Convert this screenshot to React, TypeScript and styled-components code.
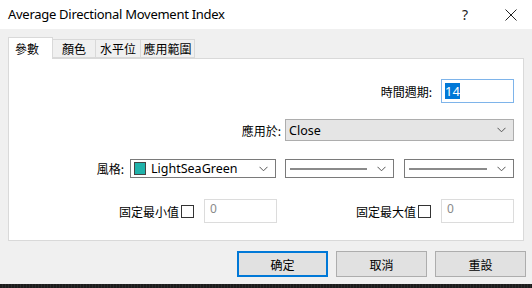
import React from "react";
import styled, { createGlobalStyle } from "styled-components";

const GlobalStyle = createGlobalStyle`
    html, body {
        margin: 0;
        padding: 0;
        background: #f0f0f0;
    }
    body {
        font-family: "Noto Sans", "Noto Sans CJK TC", sans-serif;
        font-size: 12px;
        color: #000;
    }
`

const Window = styled.div`
    width: 532px;
    height: 288px;
    display: flex;
    flex-direction: column;
    background: #f0f0f0;
    overflow: hidden;
`

const TitleBar = styled.div`
    height: 29px;
    background: white;
    display: flex;
    align-items: center;
    padding-left: 8px;
    flex-shrink: 0;
`

const Title = styled.div`
    flex: 1;
    font-family: "Noto Sans", sans-serif;
    font-size: 13px;
    letter-spacing: -0.28px;
    padding-bottom: 1px;
`

const TitleButton = styled.div<{ $w: number }>`
    width: ${p => p.$w}px;
    height: 29px;
    display: flex;
    align-items: center;
    justify-content: center;
    color: #222;
    font-family: "Noto Sans", sans-serif;
    font-size: 14px;
`

const Body = styled.div`
    flex: 1;
    display: flex;
    flex-direction: column;
    padding: 8px 8px 0 8px;
`

const TabRow = styled.div`
    display: flex;
    align-items: flex-end;
    height: 21px;
    position: relative;
    z-index: 1;
`

const Tab = styled.div<{ $active?: boolean; $w: number }>`
    width: ${p => p.$w}px;
    height: ${p => (p.$active ? 22 : 19)}px;
    margin-bottom: ${p => (p.$active ? -1 : 0)}px;
    box-sizing: border-box;
    display: flex;
    align-items: center;
    justify-content: ${p => (p.$active ? "flex-start" : "center")};
    padding-left: ${p => (p.$active ? 6 : 0)}px;
    background: ${p => (p.$active ? "white" : "#f0f0f0")};
    border: 1px solid #d9d9d9;
    border-bottom: ${p => (p.$active ? "none" : "1px solid #d9d9d9")};
    border-left-width: ${p => (p.$active ? 1 : 0)}px;
    font-family: "Noto Sans CJK TC", sans-serif;
    font-size: 12px;
`

const Panel = styled.div`
    height: 183px;
    box-sizing: border-box;
    background: white;
    border: 1px solid #d9d9d9;
    padding: 20px 9px 0 0;
    display: flex;
    flex-direction: column;
`

const Row = styled.div<{ $top: number; $h: number }>`
    display: flex;
    align-items: center;
    justify-content: flex-end;
    margin-top: ${p => p.$top}px;
    height: ${p => p.$h}px;
`

const Label = styled.span<{ $gap: number }>`
    font-family: "Noto Sans CJK TC", sans-serif;
    font-size: 12px;
    margin-right: ${p => p.$gap}px;
    white-space: nowrap;
`

const TextInput = styled.div<{ $focus?: boolean; $disabled?: boolean }>`
    width: 73px;
    height: 24px;
    box-sizing: border-box;
    border: 1px solid ${p => (p.$focus ? "#7eb4ea" : p.$disabled ? "#dcdcdc" : "#7a7a7a")};
    background: white;
    padding: ${p => (p.$disabled ? "1px 0 0 5px" : "3px 0 0 3px")};
    display: flex;
    align-items: flex-start;
    font-family: "Noto Sans", sans-serif;
    font-size: ${p => (p.$disabled ? 12 : 13)}px;
    line-height: ${p => (p.$disabled ? 15 : 16)}px;
    color: ${p => (p.$disabled ? "#8a8a8a" : "#000")};
`

const Selected = styled.span`
    background: #0078d7;
    color: white;
`

const Select = styled.div<{ $w: number; $h: number; $gray?: boolean; $gap?: number }>`
    width: ${p => p.$w}px;
    height: ${p => p.$h}px;
    box-sizing: border-box;
    border: 1px solid ${p => (p.$gray ? "#adadad" : "#7a7a7a")};
    background: ${p => (p.$gray ? "#e5e5e5" : "white")};
    margin-left: ${p => p.$gap ?? 0}px;
    display: flex;
    align-items: center;
    padding-left: 3px;
    padding-right: 7px;
    font-family: "Noto Sans", sans-serif;
    font-size: 12.5px;
`

const SelectValue = styled.div`
    flex: 1;
    display: flex;
    align-items: center;
    gap: 5px;
    min-width: 0;
`

const Swatch = styled.div<{ $color: string }>`
    width: 12px;
    height: 13px;
    background: ${p => p.$color};
    border: 1px solid #444;
    box-sizing: border-box;
`

const LineSample = styled.div`
    flex: 1;
    height: 2px;
    background: #8a8a8a;
    margin: 0 10px 0 1px;
`

const Checkbox = styled.div`
    width: 13px;
    height: 13px;
    box-sizing: border-box;
    border: 1px solid #333;
    background: white;
    margin: 0 10px 0 2px;
`

const Group = styled.div<{ $gap?: number }>`
    display: flex;
    align-items: center;
    margin-left: ${p => p.$gap ?? 0}px;
`

const Footer = styled.div`
    display: flex;
    justify-content: flex-end;
    gap: 8px;
    padding-top: 10px;
    margin-right: -2px;
`

const Button = styled.div<{ $default?: boolean }>`
    width: 91px;
    height: 26px;
    box-sizing: border-box;
    background: #e1e1e1;
    border: ${p => (p.$default ? "2px solid #0078d7" : "1px solid #adadad")};
    display: flex;
    align-items: center;
    justify-content: center;
    font-family: "Noto Sans CJK TC", sans-serif;
    font-size: 12px;
`

const Backdrop = styled.div`
    margin-top: auto;
    height: 4px;
    background: repeating-linear-gradient(90deg, #1c1c1c 0 2px, #2a2a2a 2px 3px);
`

const Chevron = () => (
    <svg width="9" height="6" viewBox="0 0 9 6">
        <path d="M0.5 0.8 L4.5 4.8 L8.5 0.8" fill="none" stroke="#555" strokeWidth="1" />
    </svg>
)

const App = () => {
    return <Window>
        <GlobalStyle />
        <TitleBar>
            <Title>Average Directional Movement Index</Title>
            <TitleButton $w={50}>?</TitleButton>
            <TitleButton $w={42}>
                <svg width="12" height="12" viewBox="0 0 12 12">
                    <path d="M0.5 0.5 L11.5 11.5 M11.5 0.5 L0.5 11.5" stroke="#222" strokeWidth="1" />
                </svg>
            </TitleButton>
        </TitleBar>
        <Body>
            <TabRow>
                <Tab $active $w={45}>參數</Tab>
                <Tab $w={43}>顏色</Tab>
                <Tab $w={45}>水平位</Tab>
                <Tab $w={54}>應用範圍</Tab>
            </TabRow>
            <Panel>
                <Row $top={0} $h={24}>
                    <Label $gap={9}>時間週期:</Label>
                    <TextInput $focus><Selected>14</Selected></TextInput>
                </Row>
                <Row $top={16} $h={22}>
                    <Label $gap={4}>應用於:</Label>
                    <Select $w={229} $h={22} $gray>
                        <SelectValue>Close</SelectValue>
                        <Chevron />
                    </Select>
                </Row>
                <Row $top={18} $h={19}>
                    <Label $gap={6}>風格:</Label>
                    <Select $w={146} $h={19}>
                        <SelectValue><Swatch $color="#20b2aa" />LightSeaGreen</SelectValue>
                        <Chevron />
                    </Select>
                    <Select $w={109} $h={19} $gap={9}>
                        <SelectValue><LineSample /></SelectValue>
                        <Chevron />
                    </Select>
                    <Select $w={110} $h={19} $gap={10}>
                        <SelectValue><LineSample /></SelectValue>
                        <Chevron />
                    </Select>
                </Row>
                <Row $top={21} $h={24}>
                    <Group>
                        <Label $gap={0}>固定最小值</Label>
                        <Checkbox />
                        <TextInput $disabled>0</TextInput>
                    </Group>
                    <Group $gap={79}>
                        <Label $gap={0}>固定最大值</Label>
                        <Checkbox />
                        <TextInput $disabled>0</TextInput>
                    </Group>
                </Row>
            </Panel>
            <Footer>
                <Button $default>确定</Button>
                <Button>取消</Button>
                <Button>重設</Button>
            </Footer>
        </Body>
        <Backdrop />
    </Window>
}

export default App;
